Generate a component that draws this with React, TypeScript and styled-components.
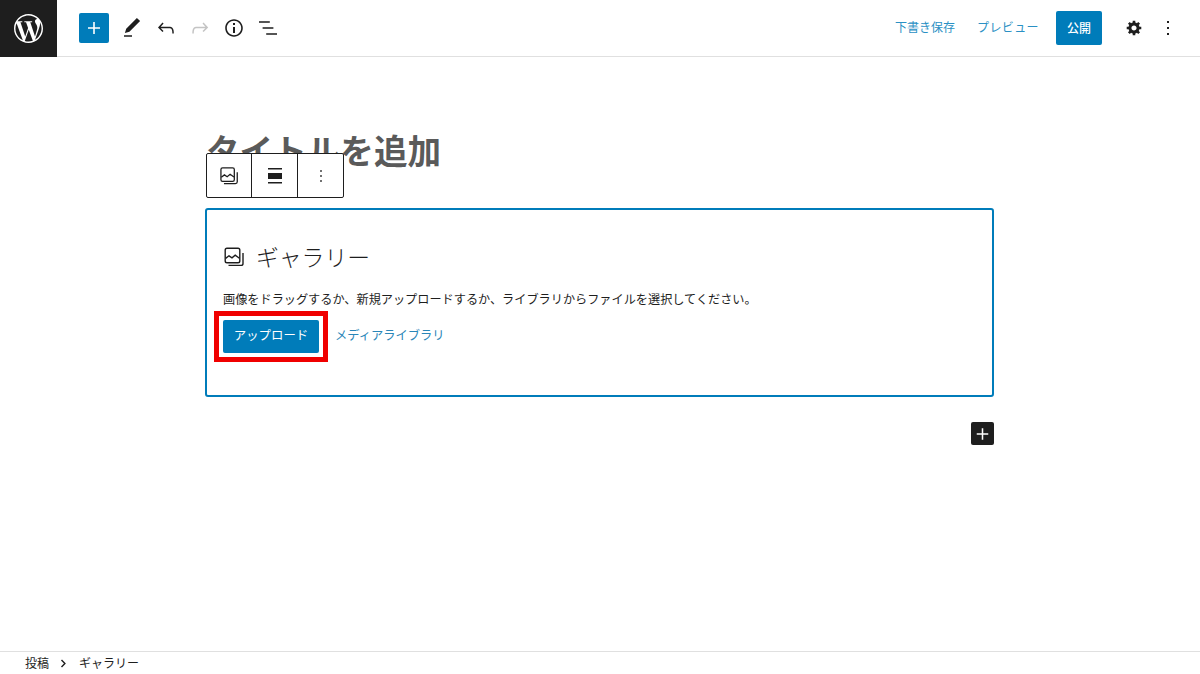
import styled, { createGlobalStyle } from "styled-components";
import { SiWordpress } from "react-icons/si";

const GlobalStyle = createGlobalStyle`
  html, body {
    margin: 0;
    padding: 0;
    background: #fff;
  }
  body {
    font-family: "Noto Sans CJK JP", "Noto Sans", sans-serif;
    color: #1e1e1e;
  }
`;

const Page = styled.div`
  width: 1200px;
  height: 674px;
  display: flex;
  flex-direction: column;
  overflow: hidden;
`;

const Header = styled.header`
  height: 56px;
  flex: none;
  display: flex;
  align-items: center;
  border-bottom: 1px solid #e0e0e0;
`;

const LogoBox = styled.div`
  width: 57px;
  height: 57px;
  margin-bottom: -1px;
  background: #1e1e1e;
  color: #fff;
  display: flex;
  align-items: center;
  justify-content: center;
  font-size: 29px;
`;

const LeftTools = styled.div`
  display: flex;
  align-items: center;
  margin-left: 22px;
  gap: 10px;
`;

const InsertButton = styled.div`
  width: 30px;
  height: 30px;
  margin-right: 1px;
  border-radius: 2px;
  background: #007cba;
  color: #fff;
  display: flex;
  align-items: center;
  justify-content: center;
`;

const ToolIcon = styled.div<{ $muted?: boolean }>`
  width: 24px;
  height: 24px;
  color: ${(props) => (props.$muted ? "#c4c4c4" : "#1e1e1e")};
  display: flex;
`;

const RightTools = styled.div`
  margin-left: auto;
  margin-right: 20px;
  display: flex;
  align-items: center;
`;

const LinkAction = styled.span<{ $gap: number; $spacing?: number }>`
  font-size: 12px;
  line-height: 20px;
  padding-bottom: 2px;
  color: #2a90c4;
  letter-spacing: ${(props) => props.$spacing ?? 0}px;
  margin-right: ${(props) => props.$gap}px;
`;

const PublishButton = styled.div`
  width: 46px;
  height: 34px;
  box-sizing: border-box;
  padding-bottom: 2px;
  border-radius: 2px;
  background: #007cba;
  color: #fff;
  font-size: 12px;
  font-weight: 500;
  display: flex;
  align-items: center;
  justify-content: center;
  margin-right: 20px;
`;

const SettingsIcon = styled.div`
  width: 24px;
  height: 24px;
  display: flex;
  align-items: center;
  justify-content: center;
  margin-right: 10px;
  color: #1e1e1e;
`;

const Main = styled.main`
  flex: 1;
  width: 788px;
  margin: 0 auto;
  position: relative;
  display: flex;
  flex-direction: column;
`;

const PostTitle = styled.h1`
  margin: 69px 0 0;
  font-size: 33.6px;
  line-height: 47px;
  font-weight: 700;
  color: #5a5a5a;
`;

const BlockToolbar = styled.div`
  position: absolute;
  left: 0;
  top: 96px;
  height: 45px;
  display: flex;
  background: #fff;
  border: 1px solid #1e1e1e;
  border-radius: 2px;
  box-sizing: border-box;
`;

const ToolbarCell = styled.div`
  width: 46px;
  box-sizing: border-box;
  display: flex;
  align-items: center;
  justify-content: center;
  color: #1e1e1e;
  &:first-child {
    width: 44px;
  }
  & + & {
    border-left: 1px solid #1e1e1e;
  }
`;

const Placeholder = styled.section`
  margin: 35px 0 0 -1px;
  height: 189px;
  box-sizing: border-box;
  border: 2px solid #007cba;
  border-radius: 3px;
  padding: 31px 16px 0;
  display: flex;
  flex-direction: column;
`;

const PlaceholderLabel = styled.div`
  display: flex;
  align-items: center;
  gap: 10px;
  margin-left: -1px;
  font-size: 22.8px;
  line-height: 32px;
  font-weight: 300;
  color: #1e1e1e;
`;

const Instructions = styled.p`
  margin: 17px 0 0;
  font-size: 12.16px;
  line-height: 18px;
  color: #1e1e1e;
`;

const Actions = styled.div`
  margin-top: 12px;
  display: flex;
  align-items: center;
  gap: 16px;
`;

const Highlight = styled.div`
  margin: -9px;
  padding: 4px;
  border: 5px solid #f00000;
`;

const UploadButton = styled.div`
  width: 96px;
  height: 33px;
  box-sizing: border-box;
  padding-bottom: 3px;
  border-radius: 2px;
  background: #007cba;
  color: #fff;
  font-size: 12.4px;
  display: flex;
  align-items: center;
  justify-content: center;
`;

const MediaLink = styled.span`
  font-size: 12.25px;
  padding-bottom: 4px;
  color: #2a86b8;
`;

const AppenderRow = styled.div`
  margin-top: 25px;
  display: flex;
  justify-content: flex-end;
`;

const Appender = styled.div`
  width: 23px;
  height: 23px;
  border-radius: 2px;
  background: #1e1e1e;
  color: #fff;
  display: flex;
  align-items: center;
  justify-content: center;
`;

const Footer = styled.footer`
  height: 22px;
  flex: none;
  border-top: 1px solid #e0e0e0;
  display: flex;
  align-items: center;
  padding-left: 25px;
  font-size: 12px;
  color: #1e1e1e;
`;

const Crumb = styled.span`
  line-height: 20px;
`;

const CrumbArrow = styled.svg`
  width: 7px;
  height: 9px;
  margin: 0 12px 0 11px;
`;

function GalleryIcon({ size }: { size: number }) {
  return (
    <svg width={size} height={size} viewBox="0 0 24 24" fill="none" stroke="currentColor" strokeWidth="1.4">
      <rect x="3.2" y="3.2" width="14.6" height="14.6" rx="1.8" />
      <path d="M3.6 13.4l3.4-2.6 3 2 3.2-2.6 4.2 3" />
      <path d="M21 8v10.4a2 2 0 0 1-2 2H6.5" />
    </svg>
  );
}

function Glyph({ d, size = 24 }: { d: string; size?: number }) {
  return (
    <svg width={size} height={size} viewBox="0 0 24 24" fill="currentColor">
      <path d={d} />
    </svg>
  );
}

const PLUS = "M18 11.2h-5.2V6h-1.6v5.2H6v1.6h5.2V18h1.6v-5.2H18z";
const PENCIL = "M20.1 5.1L16.9 2 6.2 12.7l-1.3 4.4 4.5-1.3L20.1 5.1zM4 20.8h8v-1.5H4v1.5z";
const UNDO = "M18.3 11.7c-.6-.6-1.4-.9-2.3-.9H6.7l2.9-3.3-1.1-1-4.5 5L8.5 16l1-1-2.7-2.7H16c.5 0 .9.2 1.3.5 1 1 1 3.4 1 4.5v.3h1.5v-.2c0-1.5 0-4.3-1.5-5.7z";
const REDO = "M15.6 6.5l-1.1 1 2.9 3.3H8c-.9 0-1.7.3-2.3.9-1.4 1.5-1.4 4.2-1.4 5.6v.2h1.5v-.3c0-1.1 0-3.5 1-4.5.3-.3.7-.5 1.3-.5h9.2L14.5 15l1.1 1.1 4.6-4.6-4.6-5z";
const INFO = "M12 3.2c-4.8 0-8.8 3.9-8.8 8.8 0 4.8 3.9 8.8 8.8 8.8 4.8 0 8.8-3.9 8.8-8.8 0-4.8-4-8.8-8.8-8.8zm0 16c-4 0-7.2-3.3-7.2-7.2C4.8 8 8 4.8 12 4.8s7.2 3.3 7.2 7.2c0 4-3.2 7.2-7.2 7.2zM11 17h2v-6h-2v6zm0-8h2V7h-2v2z";
const LIST = "M13.8 5.2H3v1.5h10.8V5.2zm-3.6 12v1.5H21v-1.5H10.2zm7.2-6H6.6v1.5h10.8v-1.5z";
const MORE = "M13 19h-2v-2h2v2zm0-6h-2v-2h2v2zm0-6h-2V5h2v2z";
const ALIGN = "M5 5.5h14V4H5v1.5zM5 9v6h14V9H5zm0 10.5h14V18H5v1.5z";
const COG =
  "M18 12h-2.18c-.17.7-.44 1.35-.81 1.93l1.54 1.54-2.1 2.1-1.54-1.54c-.58.36-1.23.63-1.91.79V19H8v-2.18c-.68-.16-1.33-.43-1.91-.79l-1.54 1.54-2.12-2.12 1.54-1.54c-.36-.58-.63-1.23-.79-1.91H1V9.03h2.17c.16-.7.44-1.35.8-1.94L2.43 5.55l2.1-2.1 1.54 1.54c.58-.37 1.24-.64 1.93-.81V2h3v2.18c.68.16 1.33.43 1.91.79l1.54-1.54 2.12 2.12-1.54 1.54c.36.59.64 1.24.8 1.94H18V12zm-8.5 1.5c1.66 0 3-1.34 3-3s-1.34-3-3-3-3 1.34-3 3 1.34 3 3 3z";

export default function App() {
  return (
    <Page>
      <GlobalStyle />
      <Header>
        <LogoBox>
          <SiWordpress />
        </LogoBox>
        <LeftTools>
          <InsertButton>
            <Glyph d={PLUS} />
          </InsertButton>
          <ToolIcon>
            <Glyph d={PENCIL} />
          </ToolIcon>
          <ToolIcon>
            <Glyph d={UNDO} />
          </ToolIcon>
          <ToolIcon $muted>
            <Glyph d={REDO} />
          </ToolIcon>
          <ToolIcon>
            <Glyph d={INFO} />
          </ToolIcon>
          <ToolIcon>
            <Glyph d={LIST} />
          </ToolIcon>
        </LeftTools>
        <RightTools>
          <LinkAction $gap={22}>下書き保存</LinkAction>
          <LinkAction $gap={17} $spacing={0.4}>プレビュー</LinkAction>
          <PublishButton>公開</PublishButton>
          <SettingsIcon>
            <svg width="18" height="18" viewBox="0 0 19 21" fill="currentColor">
              <path d={COG} />
            </svg>
          </SettingsIcon>
          <ToolIcon>
            <Glyph d={MORE} />
          </ToolIcon>
        </RightTools>
      </Header>
      <Main>
        <PostTitle>タイトルを追加</PostTitle>
        <BlockToolbar>
          <ToolbarCell>
            <GalleryIcon size={22} />
          </ToolbarCell>
          <ToolbarCell>
            <Glyph d={ALIGN} />
          </ToolbarCell>
          <ToolbarCell>
            <Glyph d={MORE} size={20} />
          </ToolbarCell>
        </BlockToolbar>
        <Placeholder>
          <PlaceholderLabel>
            <GalleryIcon size={24} />
            ギャラリー
          </PlaceholderLabel>
          <Instructions>画像をドラッグするか、新規アップロードするか、ライブラリからファイルを選択してください。</Instructions>
          <Actions>
            <Highlight>
              <UploadButton>アップロード</UploadButton>
            </Highlight>
            <MediaLink>メディアライブラリ</MediaLink>
          </Actions>
        </Placeholder>
        <AppenderRow>
          <Appender>
            <Glyph d={PLUS} />
          </Appender>
        </AppenderRow>
      </Main>
      <Footer>
        <Crumb>投稿</Crumb>
        <CrumbArrow viewBox="0 0 7 9" fill="none" stroke="#1e1e1e" strokeWidth="1.4">
          <path d="M1.5 1l3.4 3.5L1.5 8" />
        </CrumbArrow>
        <Crumb>ギャラリー</Crumb>
      </Footer>
    </Page>
  );
}
